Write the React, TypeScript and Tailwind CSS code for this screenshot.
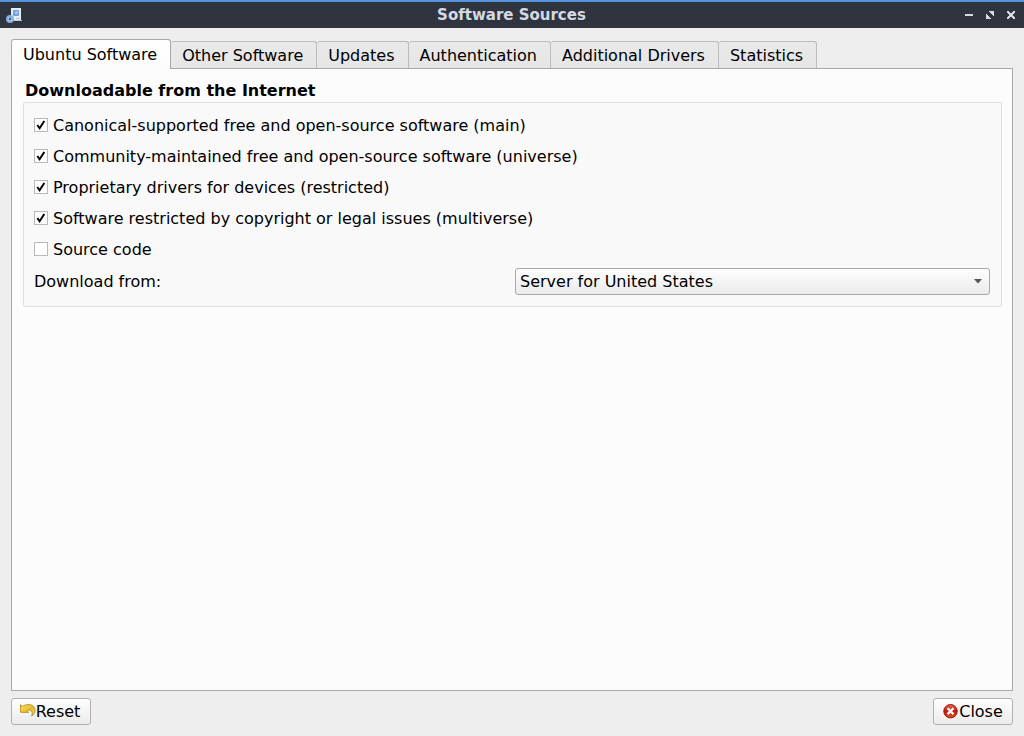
import { useState } from "react";

const tabs = [
  "Ubuntu Software",
  "Other Software",
  "Updates",
  "Authentication",
  "Additional Drivers",
  "Statistics",
];

const sources = [
  { id: "main", label: "Canonical-supported free and open-source software (main)", on: true },
  { id: "universe", label: "Community-maintained free and open-source software (universe)", on: true },
  { id: "restricted", label: "Proprietary drivers for devices (restricted)", on: true },
  { id: "multiverse", label: "Software restricted by copyright or legal issues (multiverse)", on: true },
  { id: "source", label: "Source code", on: false },
];

function AppIcon() {
  return (
    <svg width="16" height="16" viewBox="0 0 16 16" aria-hidden="true">
      <path d="M5 1h10v13H5z" fill="#e6edf5" />
      <path d="M6 13h10v1H6z" fill="#b9c6d6" />
      <rect x="7" y="3" width="6" height="6" rx="1" fill="#6d9fdc" />
      <circle cx="10.5" cy="5.500" r="1.800" fill="#a3c6ef" />
      <path d="M10 11.500h4" stroke="#b4c3d6" />
      <circle cx="4" cy="12" r="3" fill="#dbe8f7" stroke="#86aede" strokeWidth="2" />
      <circle cx="4" cy="12" r="1.400" fill="#2f5f9e" />
    </svg>
  );
}

function ResetIcon() {
  return (
    <svg width="16" height="16" viewBox="0 0 16 16" aria-hidden="true">
      <defs>
        <linearGradient id="gold" x1="0" y1="0" x2="1" y2="1">
          <stop offset="0" stopColor="#fbe15a" />
          <stop offset="0.55" stopColor="#e6b932" />
          <stop offset="1" stopColor="#ecd2a4" />
        </linearGradient>
      </defs>
      <path
        d="M.5.8 2.600 2.400C5.500.3 10.500-.3 13.300 2.200c2.900 2.800 2.100 7.200-1.600 9.900 1.200-3.300.4-5.400-1.600-5.900-1.300-.3-2.300.1-3.200.7L8.700 8.400.6 8.300Z"
        fill="url(#gold)"
        stroke="#b88d1c"
        strokeWidth="0.9"
        strokeLinejoin="round"
      />
    </svg>
  );
}

function CloseIcon() {
  return (
    <svg width="16" height="16" viewBox="0 0 16 16" aria-hidden="true">
      <defs>
        <linearGradient id="red" x1="0" y1="0" x2="0" y2="1">
          <stop offset="0" stopColor="#dd6a58" />
          <stop offset="0.5" stopColor="#c01a0c" />
          <stop offset="1" stopColor="#e8501f" />
        </linearGradient>
      </defs>
      <circle cx="7.500" cy="7.200" r="6.700" fill="url(#red)" stroke="#a31208" />
      <path d="m4.600 4.300 5.800 5.800m0-5.800-5.800 5.800" stroke="#fff" strokeWidth="2.300" />
    </svg>
  );
}

export default function App() {
  const [active, setActive] = useState(tabs[0]);

  return (
    <div className="flex min-h-screen flex-col bg-[#eeeeee] font-['DejaVu_Sans',sans-serif] text-base leading-5 text-black">
      <header className="grid h-7 grid-cols-[1fr_auto_1fr] items-center border-t-2 border-[#5294e2] bg-[#2f343f] pr-[7px] pl-1.5 text-[#d3dae3]">
        <AppIcon />
        <h1 className="text-[15px] leading-5 font-bold">Software Sources</h1>
        <div className="flex items-center justify-end gap-2">
          <button type="button" aria-label="Minimize" className="flex size-[13px] items-center justify-center">
            <svg width="8" height="8" viewBox="0 0 8 8" shapeRendering="crispEdges">
              <path d="M0 3h8v2H0z" fill="currentColor" />
            </svg>
          </button>
          <button type="button" aria-label="Maximize" className="flex size-[13px] items-center justify-center">
            <svg width="8" height="8" viewBox="0 0 8 8" shapeRendering="crispEdges">
              <path d="M3 0h5v5H7V4H6V3H5V2H4V1H3zM0 3h1v1h1v1h1v1h1v1h1v1H0z" fill="currentColor" />
            </svg>
          </button>
          <button type="button" aria-label="Close window" className="flex size-[13px] items-center justify-center">
            <svg width="8" height="8" viewBox="0 0 8 8" shapeRendering="crispEdges">
              <path
                d="M0 0h2v1h1v1h2V1h1V0h2v2H7v1H6v2h1v1h1v2H6V7H5V6H3v1H2v1H0V6h1V5h1V3H1V2H0z"
                fill="currentColor"
              />
            </svg>
          </button>
        </div>
      </header>

      <main className="flex flex-1 flex-col px-[11px] pt-[11px] pb-[11px]">
        <div role="tablist" className="z-10 -mb-px flex items-end">
          {tabs.map((tab) => (
            <button
              key={tab}
              type="button"
              role="tab"
              aria-selected={tab === active}
              onClick={() => setActive(tab)}
              className={
                tab === active
                  ? "h-[30px] rounded-t-[3px] border border-b-0 border-[#a9a9a9] bg-linear-to-b from-white to-[#fcfcfc] pr-[13px] pl-[11px] whitespace-nowrap"
                  : "mb-px h-[27px] rounded-t-[3px] border-t border-r border-[#bcbcbc] bg-linear-to-b from-[#e9e9e9] to-[#e6e6e6] pt-0.5 pr-[13px] pl-[11px] whitespace-nowrap"
              }
            >
              {tab}
            </button>
          ))}
        </div>

        <section
          role="tabpanel"
          aria-label={active}
          className="flex-1 border border-[#a9a9a9] bg-[#fcfcfc] pt-3 pr-[10px] pl-[11px]"
        >
          <h2 className="px-0.5 pb-px font-bold">Downloadable from the Internet</h2>
          <div className="rounded-xs border border-[#dfdfdf] bg-[#f9f9f9] pt-[13px] pr-[11px] pb-[11px] pl-[10px]">
            <div className="flex flex-col items-start gap-[11px]">
              {sources.map((source) => (
                <label key={source.id} className="flex items-start gap-[5px]">
                  <span className="relative mt-0.5 flex">
                    <input
                      type="checkbox"
                      defaultChecked={source.on}
                      className="peer size-[14px] appearance-none border border-[#b9b9b9] bg-white"
                    />
                    <svg
                      className="pointer-events-none absolute inset-0 hidden peer-checked:block"
                      width="14"
                      height="14"
                      viewBox="0 0 14 14"
                    >
                      <path d="m3.300 7 2.300 3.300L10.300 3" fill="none" stroke="#000" strokeWidth="2" />
                    </svg>
                  </span>
                  {source.label}
                </label>
              ))}
            </div>
            <div className="mt-2 grid grid-cols-2 items-center gap-1.5">
              <label htmlFor="server">Download from:</label>
              <div className="relative">
                <select
                  id="server"
                  className="block h-[27px] w-full appearance-none rounded-[3px] border border-[#a9a9a9] bg-linear-to-b from-[#fefefe] to-[#ebebeb] px-1"
                >
                  <option>Server for United States</option>
                  <option>Main server</option>
                </select>
                <svg
                  className="pointer-events-none absolute top-[11px] right-2"
                  width="8"
                  height="5"
                  viewBox="0 0 8 5"
                >
                  <path d="M0 0h8L4 4.500z" fill="#555" />
                </svg>
              </div>
            </div>
          </div>
        </section>

        <footer className="mt-[7px] flex justify-between">
          <button
            type="button"
            className="flex h-[27px] min-w-20 items-center justify-center rounded-[3px] border border-[#b0b0b0] bg-linear-to-b from-[#fefefe] to-[#ebebeb] pr-0.5"
          >
            <ResetIcon />
            Reset
          </button>
          <button
            type="button"
            className="flex h-[27px] min-w-20 items-center justify-center rounded-[3px] border border-[#b0b0b0] bg-linear-to-b from-[#fefefe] to-[#ebebeb]"
          >
            <CloseIcon />
            Close
          </button>
        </footer>
      </main>
    </div>
  );
}
